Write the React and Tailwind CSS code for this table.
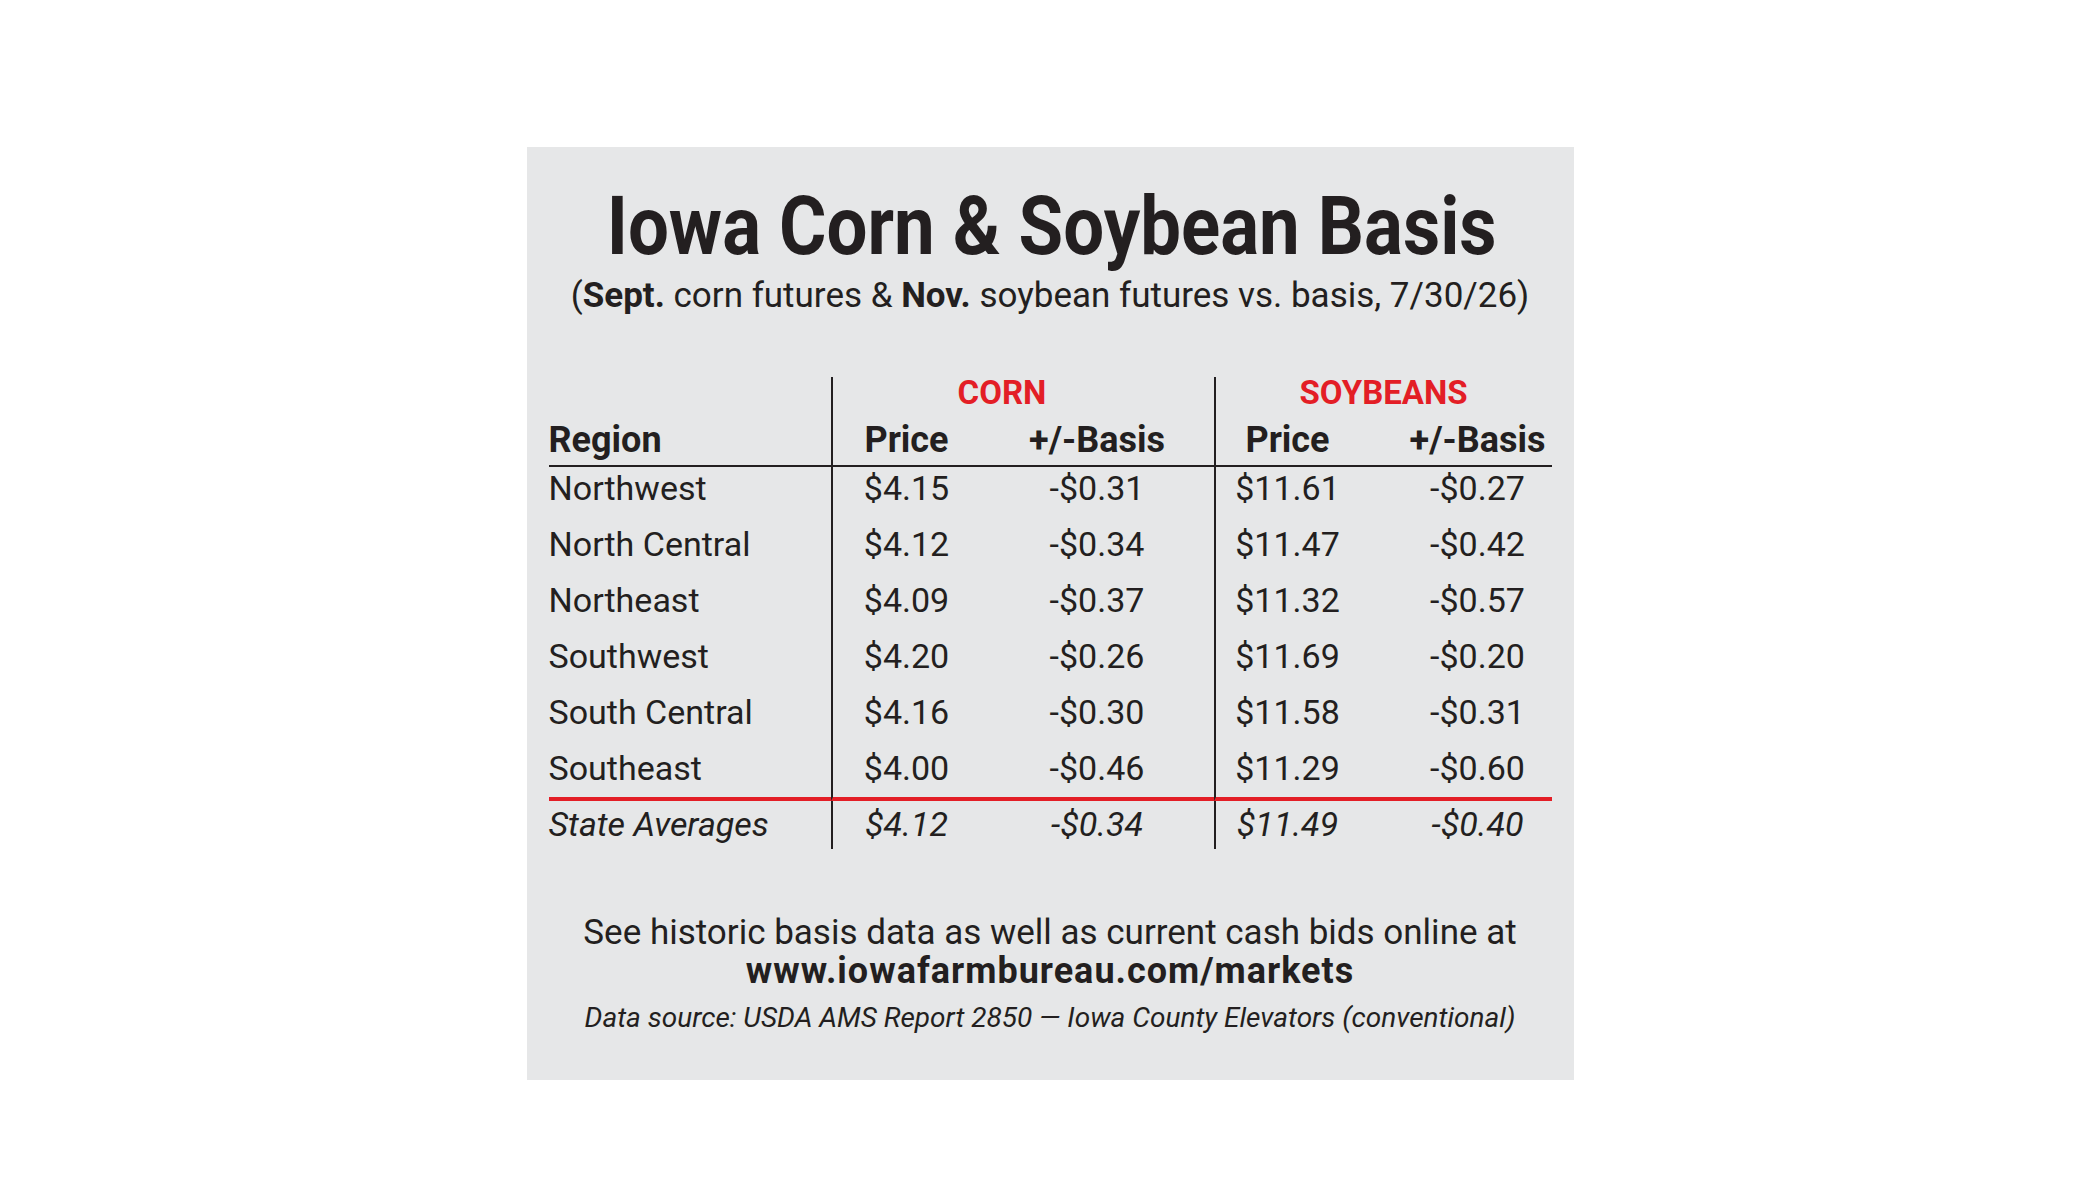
import React from 'react';

const rows = [
  ['Northwest', '$4.15', '-$0.31', '$11.61', '-$0.27'],
  ['North Central', '$4.12', '-$0.34', '$11.47', '-$0.42'],
  ['Northeast', '$4.09', '-$0.37', '$11.32', '-$0.57'],
  ['Southwest', '$4.20', '-$0.26', '$11.69', '-$0.20'],
  ['South Central', '$4.16', '-$0.30', '$11.58', '-$0.31'],
  ['Southeast', '$4.00', '-$0.46', '$11.29', '-$0.60'],
];

const avg = ['State Averages', '$4.12', '-$0.34', '$11.49', '-$0.40'];

function Row({ cells, className }) {
  return (
    <>
      <div className={className}>{cells[0]}</div>
      <div className={`border-l-2 border-[#231f20] text-center ${className}`}>{cells[1]}</div>
      <div className={`text-center ${className}`}>{cells[2]}</div>
      <div className={`border-l-2 border-[#231f20] text-center ${className}`}>{cells[3]}</div>
      <div className={`pl-[44px] text-center ${className}`}>{cells[4]}</div>
    </>
  );
}

export default function App() {
  return (
    <div className="min-h-screen bg-white pt-[147px] font-['Roboto',sans-serif] text-[#231f20]">
      <div className="mx-auto w-[1047px] bg-[#e6e7e8] px-[22px] pt-[34px] pb-[44px]">
        <h1 className="h-[90px] origin-center scale-x-[0.885] whitespace-nowrap text-center text-[82px] leading-[90px] font-bold">
          Iowa Corn &amp; Soybean Basis
        </h1>
        <p className="mt-[3px] whitespace-nowrap text-center text-[35px] leading-[44px]">
          (<span className="font-bold">Sept.</span> corn futures &amp; <span className="font-bold">Nov.</span> soybean futures vs. basis, 7/30/26)
        </p>

        <div className="mt-[59px] grid grid-cols-[282px_150px_233px_146px_192px]">
          {/* group headings */}
          <div className="h-[31px]" />
          <div className="col-span-2 h-[31px] border-l-2 border-[#231f20] pr-[42px] text-center text-[33px] leading-[31px] font-bold text-[#e31e26]">
            CORN
          </div>
          <div className="col-span-2 h-[31px] border-l-2 border-[#231f20] text-center text-[33px] leading-[31px] font-bold text-[#e31e26]">
            SOYBEANS
          </div>

          {/* column headings */}
          <div className="border-b-2 border-[#231f20] pt-[12px] pb-[5px] text-[36px] leading-[40px] font-bold">Region</div>
          <div className="border-b-2 border-l-2 border-[#231f20] pt-[12px] pb-[5px] text-center text-[36px] leading-[40px] font-bold">Price</div>
          <div className="border-b-2 border-[#231f20] pt-[12px] pb-[5px] text-center text-[36px] leading-[40px] font-bold">+/-Basis</div>
          <div className="border-b-2 border-l-2 border-[#231f20] pt-[12px] pb-[5px] text-center text-[36px] leading-[40px] font-bold">Price</div>
          <div className="border-b-2 border-[#231f20] pt-[12px] pb-[5px] pl-[44px] text-center text-[36px] leading-[40px] font-bold">+/-Basis</div>

          {rows.slice(0, 5).map((r) => (
            <Row key={r[0]} cells={r} className="h-[56px] text-[34px] leading-[42px]" />
          ))}
          <Row cells={rows[5]} className="h-[54px] border-b-4 border-b-[#e31e26] text-[34px] leading-[42px]" />
          <Row cells={avg} className="h-[48px] text-[34px] leading-[46px] italic" />
        </div>

        <div className="mt-[65px] text-center">
          <p className="text-[35px] leading-[38px]">See historic basis data as well as current cash bids online at</p>
          <p className="text-[36px] leading-[38px] font-bold tracking-[1px]">www.iowafarmbureau.com/markets</p>
          <p className="mt-[10px] text-[28px] leading-[36px] italic">
            Data source: USDA AMS Report 2850 — Iowa County Elevators (conventional)
          </p>
        </div>
      </div>
    </div>
  );
}
